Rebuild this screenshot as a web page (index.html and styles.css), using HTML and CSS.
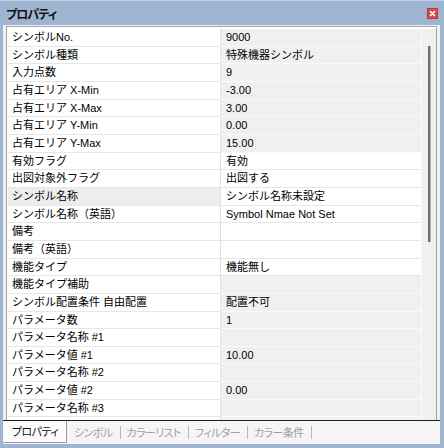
FILE: index.html
```html
<!DOCTYPE html>
<html lang="ja">
<head>
<meta charset="utf-8">
<link rel="stylesheet" href="styles.css">
</head>
<body>
<div class="window">
  <div class="titlebar">
    <span class="title">プロパティ</span>
    <span class="close"><svg width="11" height="11" viewBox="0 0 11 11"><path d="M3.5 3.5 L7.5 7.5 M7.5 3.5 L3.5 7.5" stroke="#fff" stroke-width="1.6" stroke-linecap="round"/></svg></span>
  </div>
  <div class="panel">
    <div class="gridbox">
      <div class="rows">
        <div class="row"><div class="name">シンボルNo.</div><div class="val ro">9000</div></div>
        <div class="row"><div class="name">シンボル種類</div><div class="val ro">特殊機器シンボル</div></div>
        <div class="row"><div class="name">入力点数</div><div class="val ro">9</div></div>
        <div class="row"><div class="name">占有エリア X-Min</div><div class="val ro">-3.00</div></div>
        <div class="row"><div class="name">占有エリア X-Max</div><div class="val ro">3.00</div></div>
        <div class="row"><div class="name">占有エリア Y-Min</div><div class="val ro">0.00</div></div>
        <div class="row"><div class="name">占有エリア Y-Max</div><div class="val ro">15.00</div></div>
        <div class="row"><div class="name">有効フラグ</div><div class="val">有効</div></div>
        <div class="row"><div class="name">出図対象外フラグ</div><div class="val">出図する</div></div>
        <div class="row"><div class="name sel">シンボル名称</div><div class="val">シンボル名称未設定</div></div>
        <div class="row"><div class="name">シンボル名称（英語）</div><div class="val">Symbol Nmae Not Set</div></div>
        <div class="row"><div class="name">備考</div><div class="val"></div></div>
        <div class="row"><div class="name">備考（英語）</div><div class="val"></div></div>
        <div class="row"><div class="name">機能タイプ</div><div class="val">機能無し</div></div>
        <div class="row"><div class="name">機能タイプ補助</div><div class="val ro"></div></div>
        <div class="row"><div class="name">シンボル配置条件 自由配置</div><div class="val ro">配置不可</div></div>
        <div class="row"><div class="name">パラメータ数</div><div class="val ro">1</div></div>
        <div class="row"><div class="name">パラメータ名称 #1</div><div class="val ro"></div></div>
        <div class="row"><div class="name">パラメータ値 #1</div><div class="val ro">10.00</div></div>
        <div class="row"><div class="name">パラメータ名称 #2</div><div class="val ro"></div></div>
        <div class="row"><div class="name">パラメータ値 #2</div><div class="val ro">0.00</div></div>
        <div class="row"><div class="name">パラメータ名称 #3</div><div class="val ro"></div></div>
        <div class="row"><div class="name"></div><div class="val ro"></div></div>
      </div>
      <div class="scroll"><div class="thumb"></div></div>
    </div>
    <div class="tabs">
      <div class="tab active">プロパティ</div>
      <div class="tab first">シンボル</div>
      <div class="tab">カラーリスト</div>
      <div class="tab">フィルター</div>
      <div class="tab">カラー条件</div>
    </div>
  </div>
</div>
</body>
</html>
```
FILE: styles.css
```css
html, body {
  margin: 0;
  padding: 0;
}
body {
  width: 444px;
  height: 448px;
  overflow: hidden;
  background: #9db5d0;
  font-family: "Liberation Sans", "Noto Sans CJK JP", sans-serif;
  color: #000;
}
.window {
  width: 444px;
  height: 448px;
  display: flex;
  flex-direction: column;
  border-top: 1px solid #c3d3e4;
  box-sizing: border-box;
}
.titlebar {
  height: 24px;
  display: flex;
  align-items: center;
  justify-content: space-between;
  padding: 0 6px 0 6px;
  flex: none;
}
.title {
  font-family: "Noto Sans CJK JP", sans-serif;
  font-feature-settings: "palt";
  font-weight: bold;
  font-size: 12px;
  color: #111;
  letter-spacing: -1px;
}
.close {
  width: 11px;
  height: 11px;
  background: #d44b4b;
  box-shadow: inset 0 0 0 1px #c03838;
  display: flex;
  margin-top: 1px;
}
.panel {
  flex: none;
  margin: 0 4px 0 3px;
  height: 419px;
  background: #f0f0f0;
  display: flex;
  flex-direction: column;
}
.gridbox {
  margin: 1px 3px 0 3px;
  height: 394px;
  border: 1px solid #a5a5a5;
  border-bottom: none;
  padding: 2px 0 0 1px;
  background: #fff;
  display: flex;
  overflow: hidden;
  box-sizing: border-box;
  flex: none;
}
.rows {
  width: 413px;
  flex: none;
  display: flex;
  flex-direction: column;
}
.row {
  height: 17.67px;
  flex: none;
  display: flex;
  font-size: 11px;
  line-height: 16px;
}
.name {
  width: 213px;
  flex: none;
  padding-left: 4px;
  box-sizing: border-box;
  background: #fff;
  border-bottom: 1px solid #e6e6e6;
  border-right: 1px solid #e2e2e2;
  white-space: nowrap;
  overflow: hidden;
}
.name.sel {
  background: #ededed;
}
.val {
  flex: 1;
  padding-left: 5px;
  background: #fff;
  border-bottom: 1px solid #e6e6e6;
  white-space: nowrap;
  overflow: hidden;
}
.val.ro {
  background: #f0f0f0;
  border-bottom-color: #f9f9f9;
}
.scroll {
  width: 15px;
  flex: none;
  background: #f0f0f0;
  border-left: 1px solid #fafafa;
  box-sizing: border-box;
  padding: 17px 0 0 6px;
}
.thumb {
  width: 2px;
  height: 196px;
  background: #6e6e6e;
  box-shadow: 1px 0 0 #b4b4b4;
}
.tabs {
  flex: 1;
  border-top: 1px solid #1e1e1e;
  display: flex;
  align-items: stretch;
  font-family: "Noto Sans CJK JP", sans-serif;
  font-feature-settings: "palt";
  font-size: 11px;
  letter-spacing: -0.6px;
  background: #f5f5f5;
}
.tab {
  display: flex;
  align-items: center;
  color: #a0a0a0;
  padding: 0 8px 2px 6px;
  position: relative;
}
.tab.first {
  padding-left: 7px;
}
.tab::after {
  content: "";
  position: absolute;
  right: 0;
  top: 5px;
  bottom: 5px;
  width: 1px;
  background: #b8b8b8;
}
.tab.active {
  color: #111;
  background: #fbfbfb;
  padding: 0 8px 1px 9px;
  border-right: 1px solid #9a9a9a;
  border-bottom: 1px solid #9a9a9a;
  margin-bottom: 1px;
}
.tab.active::after {
  display: none;
}
```
